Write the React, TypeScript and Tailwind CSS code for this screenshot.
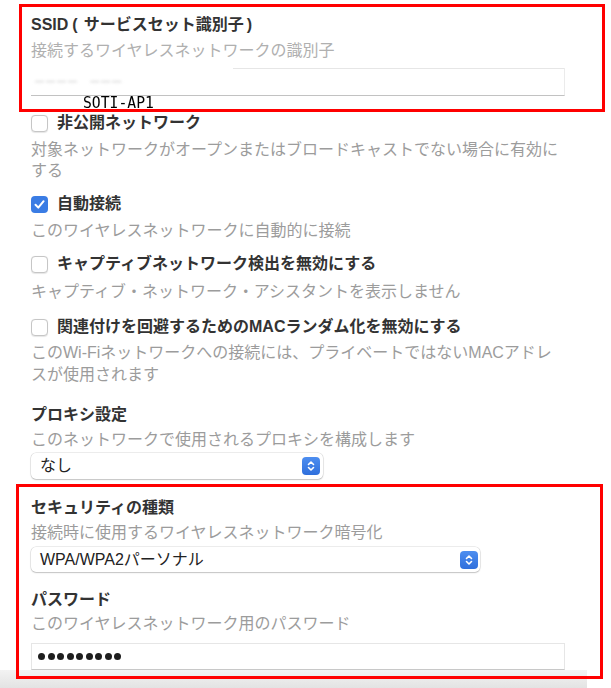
import React from "react";

const FONT = { fontFamily: '"Liberation Sans", "Noto Sans CJK JP", sans-serif' };

function Checkbox({ checked }: { checked?: boolean }) {
  if (checked) {
    return (
      <div className="w-[17px] h-[17px] rounded-[4px] bg-[#3a7ce4] flex items-center justify-center shrink-0">
        <svg width="13" height="13" viewBox="0 0 13 13">
          <polyline points="2.5,6.8 5.3,9.6 10.6,3.2" fill="none" stroke="white" strokeWidth="2" strokeLinecap="round" strokeLinejoin="round" />
        </svg>
      </div>
    );
  }
  return <div className="w-[17px] h-[17px] rounded-[4px] border border-[#c6c6c6] bg-white shadow-[0_0.5px_1px_rgba(0,0,0,0.1)] shrink-0" />;
}

function SelectBtn() {
  return (
    <div className="w-[18px] h-[18px] rounded-[4px] bg-gradient-to-b from-[#4d8ef0] to-[#2f6fdc] flex items-center justify-center">
      <svg width="10" height="14" viewBox="0 0 10 14">
        <polyline points="2.5,5.5 5,3 7.5,5.5" fill="none" stroke="white" strokeWidth="1.6" strokeLinecap="round" strokeLinejoin="round" />
        <polyline points="2.5,8.5 5,11 7.5,8.5" fill="none" stroke="white" strokeWidth="1.6" strokeLinecap="round" strokeLinejoin="round" />
      </svg>
    </div>
  );
}

function Title({ children, className = "" }: { children: React.ReactNode; className?: string }) {
  return <div className={`text-[16px] leading-[20px] font-bold text-[#333333] whitespace-nowrap ${className}`}>{children}</div>;
}

function Desc({ children, className = "" }: { children: React.ReactNode; className?: string }) {
  return <div className={`text-[16px] leading-[20px] text-[#9c9c9c] whitespace-nowrap ${className}`}>{children}</div>;
}

function CheckRow({ checked, label, className = "" }: { checked?: boolean; label: string; className?: string }) {
  return (
    <div className={`flex items-center gap-[9px] h-[20px] ${className}`}>
      <Checkbox checked={checked} />
      <span className="text-[16px] leading-[20px] font-bold text-[#333333] whitespace-nowrap">{label}</span>
    </div>
  );
}

export default function App() {
  return (
    <div className="relative w-[611px] h-[688px] bg-white overflow-hidden flex flex-col" style={FONT}>
      <div className="flex flex-col pl-[31px] pt-[15px] flex-1">
        <Title>
          SSID<span className="inline-block ml-[4px] mr-[6px]">(</span>サービスセット識別子<span className="inline-block ml-[3px]">)</span>
        </Title>
        <Desc className="mt-[6px] text-[#b0b0b0]">接続するワイヤレスネットワークの識別子</Desc>
        <div className="relative mt-[7px] w-[534px] h-[28px] border-b border-b-[#c2c2c2] border-r border-r-[#ebebeb]">
          <div className="absolute top-0 left-[202px] right-0 h-px bg-[#e6e6e6]" />
          <span
            className="absolute left-[4px] top-[6px] text-[15px] leading-[15px] text-[#cfcfcf] blur-[1.5px] tracking-[2px]"
            style={{ fontFamily: '"DejaVu Sans Mono", monospace' }}
          >
            ‒‒‒‒ ‒‒‒
          </span>
        </div>

        <CheckRow label="非公開ネットワーク" className="mt-[17px]" />
        <div className="mt-[6px] text-[16px] leading-[21px] text-[#9c9c9c] whitespace-nowrap">
          対象ネットワークがオープンまたはブロードキャストでない場合に有効に
          <br />
          する
        </div>

        <CheckRow checked label="自動接続" className="mt-[13px]" />
        <Desc className="mt-[7px]">このワイヤレスネットワークに自動的に接続</Desc>

        <CheckRow label="キャプティブネットワーク検出を無効にする" className="mt-[13px]" />
        <Desc className="mt-[8px]">キャプティブ・ネットワーク・アシスタントを表示しません</Desc>

        <CheckRow label="関連付けを回避するためのMACランダム化を無効にする" className="mt-[15px]" />
        <div className="mt-[5px] text-[16px] leading-[22px] text-[#9c9c9c] whitespace-nowrap">
          このWi-Fiネットワークへの接続には、プライベートではないMACアドレ
          <br />
          スが使用されます
        </div>

        <Title className="mt-[19px]">プロキシ設定</Title>
        <Desc className="mt-[5px]">このネットワークで使用されるプロキシを構成します</Desc>
        <div className="mt-[3px] w-[292px] h-[26px] rounded-[5px] bg-white shadow-[0_0_0_0.5px_rgba(0,0,0,0.14),0_1px_1.5px_rgba(0,0,0,0.18)] flex items-center justify-between pl-[9px] pr-[3px]">
          <span className="text-[16px] leading-[20px] text-[#222222]">なし</span>
          <SelectBtn />
        </div>

        <Title className="mt-[19px]">セキュリティの種類</Title>
        <Desc className="mt-[5px]">接続時に使用するワイヤレスネットワーク暗号化</Desc>
        <div className="mt-[4px] w-[449px] h-[25px] rounded-[5px] bg-white shadow-[0_0_0_0.5px_rgba(0,0,0,0.14),0_1px_1.5px_rgba(0,0,0,0.18)] flex items-center justify-between pl-[9px] pr-[2px]">
          <span className="text-[16px] leading-[20px] text-[#222222]">WPA/WPA2パーソナル</span>
          <SelectBtn />
        </div>

        <Title className="mt-[18px]">パスワード</Title>
        <Desc className="mt-[4px]">このワイヤレスネットワーク用のパスワード</Desc>
        <div className="mt-[9px] w-[534px] h-[27px] border border-[#e6e6e6] border-b-[#c8c8c8] bg-white flex items-center pl-[6px] gap-[2.5px]">
          {Array.from({ length: 9 }).map((_, i) => (
            <span key={i} className="w-[7px] h-[7px] rounded-full bg-[#1e1e1e]" />
          ))}
        </div>
      </div>

      <div className="w-[587px] h-[18px] bg-gradient-to-b from-[#f3f3f3] to-[#e3e3e3]" />

      <div className="absolute left-[19px] top-[4px] w-[586px] h-[108px] border-[3px] border-[#ff0000]" />
      <div className="absolute left-[16px] top-[484px] w-[587px] h-[195px] border-[3px] border-[#ff0000]" />

      <span
        className="absolute left-[83px] top-[95px] text-[16px] leading-[16px] text-black origin-left scale-x-[0.92]"
        style={{ fontFamily: '"DejaVu Sans Mono", monospace' }}
      >
        SOTI-AP1
      </span>
    </div>
  );
}
